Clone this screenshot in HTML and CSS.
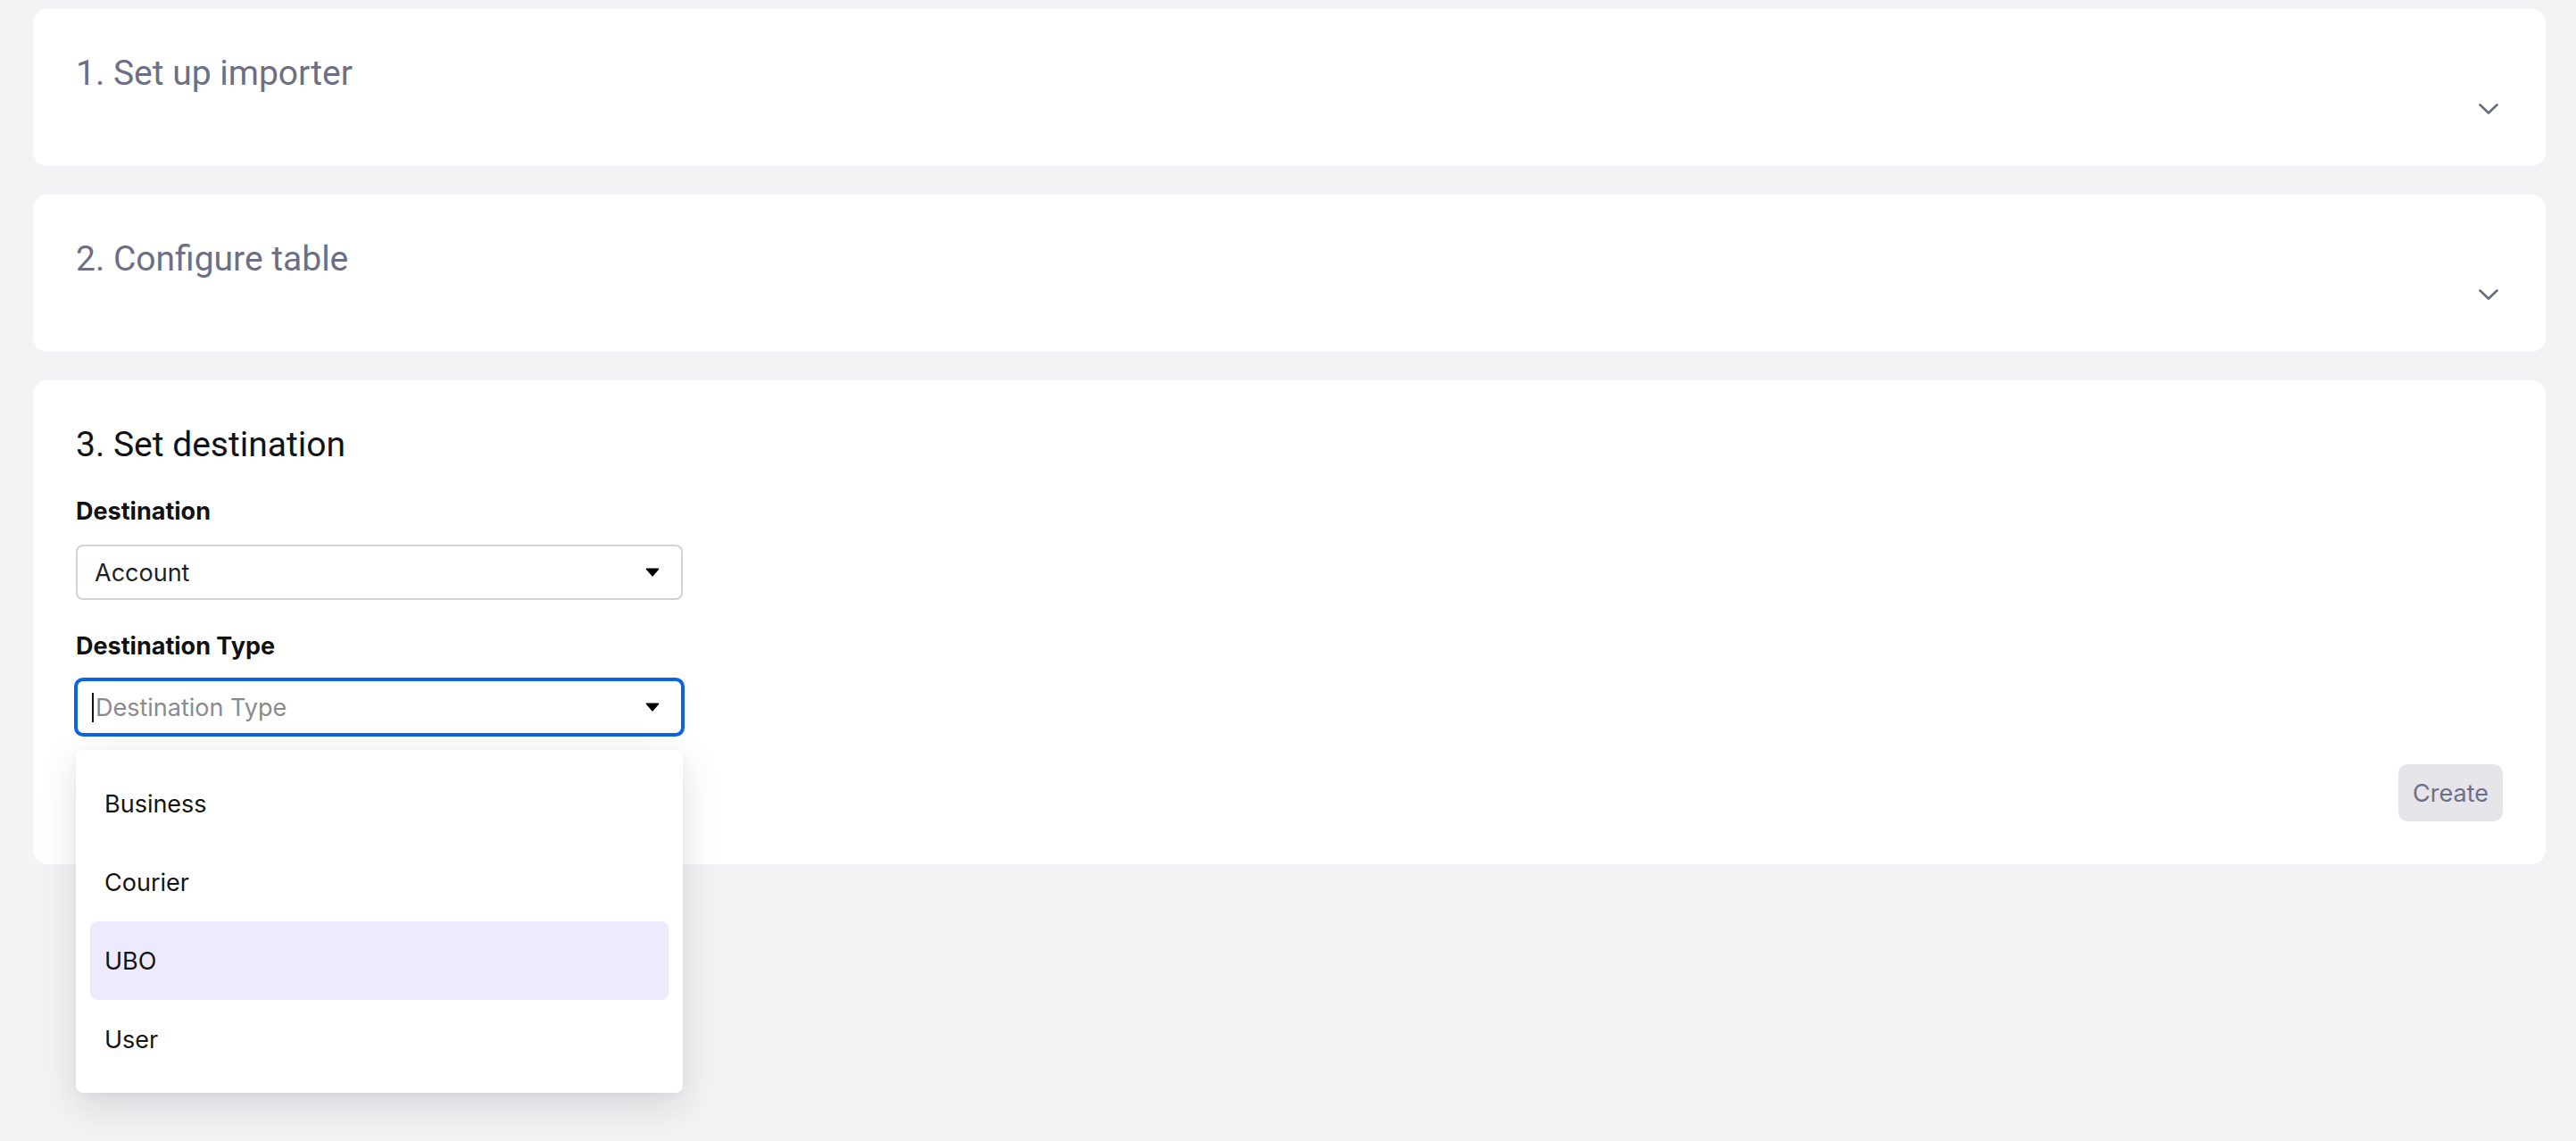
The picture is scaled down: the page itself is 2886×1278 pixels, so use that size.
FILE: index.html
```html
<!DOCTYPE html>
<html lang="en">
<head>
<meta charset="utf-8">
<title>Importer</title>
<link rel="stylesheet" href="styles.css">
</head>
<body>
<main class="page">
  <section class="card card-collapsed">
    <h2 class="step-title muted">1. Set up importer</h2>
    <span class="chevron">
      <svg width="32" height="32" viewBox="0 0 32 32"><path d="M6.5 11.5 L16 20.5 L25.5 11.5" fill="none" stroke="#6c6f85" stroke-width="2.8" stroke-linecap="round" stroke-linejoin="round"/></svg>
    </span>
  </section>

  <section class="card card-collapsed">
    <h2 class="step-title muted">2. Configure table</h2>
    <span class="chevron">
      <svg width="32" height="32" viewBox="0 0 32 32"><path d="M6.5 11.5 L16 20.5 L25.5 11.5" fill="none" stroke="#6c6f85" stroke-width="2.8" stroke-linecap="round" stroke-linejoin="round"/></svg>
    </span>
  </section>

  <section class="card card-open">
    <h2 class="step-title dark">3. Set destination</h2>

    <div class="field">
      <label class="field-label">Destination</label>
      <div class="select">
        <span class="select-value">Account</span>
        <svg class="caret" width="16" height="10" viewBox="0 0 16 10"><path d="M1.5 1.2 L14.5 1.2 L8 8.8 Z" fill="#000" stroke="#000" stroke-width="1.6" stroke-linejoin="round"/></svg>
      </div>
    </div>

    <div class="field field-second">
      <label class="field-label">Destination Type</label>
      <div class="field-wrap">
        <div class="select select-focused">
          <span class="select-placeholder"><span class="text-caret"></span>Destination Type</span>
          <svg class="caret" width="16" height="10" viewBox="0 0 16 10"><path d="M1.5 1.2 L14.5 1.2 L8 8.8 Z" fill="#000" stroke="#000" stroke-width="1.6" stroke-linejoin="round"/></svg>
        </div>
        <ul class="menu">
          <li class="menu-item">Business</li>
          <li class="menu-item">Courier</li>
          <li class="menu-item is-active">UBO</li>
          <li class="menu-item">User</li>
        </ul>
      </div>
    </div>

    <div class="actions">
      <button class="btn-create" type="button">Create</button>
    </div>
  </section>
</main>
</body>
</html>
```

FILE: styles.css
```css
html, body {
  margin: 0;
  padding: 0;
}

body {
  background: #f3f3f5;
  font-family: "Inter", "Roboto", sans-serif;
  color: #111;
  min-height: 100vh;
}

.page {
  display: flex;
  flex-direction: column;
  gap: 32px;
  padding: 10px 34px 0 37px;
}

.card {
  background: #ffffff;
  border-radius: 16px;
  padding: 48px;
}

.card-collapsed {
  display: flex;
  justify-content: space-between;
  align-items: flex-start;
  min-height: 80px;
}

.step-title {
  margin: 0;
  font-family: "Roboto", "Inter", sans-serif;
  font-weight: 400;
  font-size: 39px;
  line-height: 48px;
}

.muted {
  color: #6c6f85;
}

.dark {
  color: #111318;
  margin-bottom: 31px;
}

.chevron {
  align-self: flex-end;
  width: 32px;
  height: 32px;
  display: block;
}

.chevron svg {
  display: block;
}

.card-open {
  display: flex;
  flex-direction: column;
}

.field {
  display: flex;
  flex-direction: column;
  width: 680px;
}

.field-second {
  margin-top: 32px;
}

.field-label {
  font-size: 27px;
  font-weight: 700;
  line-height: 40px;
  color: #111;
  margin-bottom: 17px;
}

.field-wrap {
  position: relative;
}

.select {
  box-sizing: border-box;
  height: 62px;
  border: 2px solid #d2d2da;
  border-radius: 8px;
  display: flex;
  align-items: center;
  justify-content: space-between;
  padding: 0 24px 0 19px;
  font-size: 27px;
  color: #1f1f24;
  background: #fff;
}

.select-focused {
  border-color: #0b63e5;
  box-shadow: 0 0 0 2px #0b63e5;
}

.select-placeholder {
  color: #8a8a8e;
  display: flex;
  align-items: center;
}

.text-caret {
  display: inline-block;
  width: 2px;
  height: 33px;
  background: #111;
  margin-left: -3px;
  margin-right: 2px;
}

.caret {
  display: block;
  flex: none;
}

.menu {
  position: absolute;
  top: calc(100% + 17px);
  left: 0;
  right: 0;
  margin: 0;
  padding: 16px;
  list-style: none;
  background: #fff;
  border-radius: 8px;
  box-shadow: 0 14px 44px rgba(20, 22, 40, 0.13), 0 2px 10px rgba(20, 22, 40, 0.04);
  z-index: 10;
}

.menu-item {
  height: 88px;
  display: flex;
  align-items: center;
  padding: 0 16px;
  font-size: 27px;
  color: #141414;
  border-radius: 8px;
}

.menu-item.is-active {
  background: #eeeafd;
}

.actions {
  display: flex;
  justify-content: flex-end;
  margin-top: 33px;
}

.btn-create {
  height: 64px;
  padding: 0 16px;
  border: none;
  border-radius: 10px;
  background: #e5e5ea;
  color: #6c6f85;
  font-family: "Inter", sans-serif;
  font-size: 27px;
}
```
